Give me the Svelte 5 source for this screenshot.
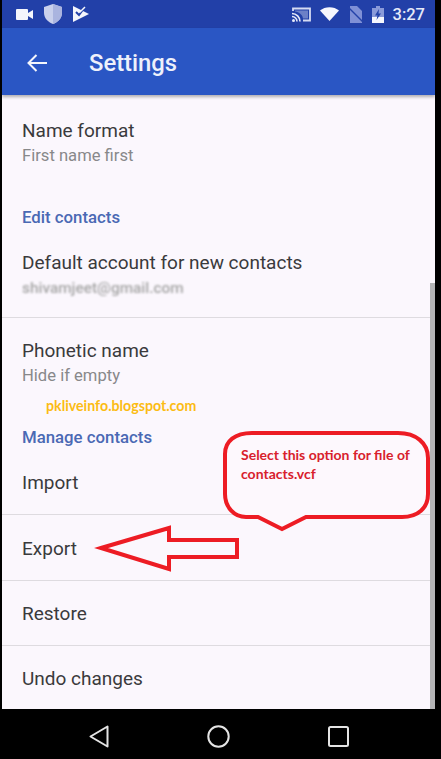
<script>
    const firstGroup = [
        { title: 'Name format', sub: 'First name first' }
    ];
    const actions = [
        { label: 'Import', size: 'tall' },
        { label: 'Export', size: 'tall' },
        { label: 'Restore', size: 'mid' },
        { label: 'Undo changes', size: 'last' }
    ];
</script>

<div class="phone">
    <div class="status">
        <div class="left-icons">
            <svg width="17" height="11" viewBox="0 0 17 11"><path d="M1 0h10a1 1 0 0 1 1 1v3l5-3v9l-5-3v3a1 1 0 0 1-1 1H1a1 1 0 0 1-1-1V1a1 1 0 0 1 1-1z" fill="#f4f6fc"/></svg>
            <svg width="20" height="20" viewBox="0 0 20 20"><path d="M10 0l9 3v6c0 5-4 9-9 11-5-2-9-6-9-11V3z" fill="#c9d0ec"/><path d="M10 0l9 3v6c0 5-4 9-9 11z" fill="#aab4df"/></svg>
            <svg width="16" height="16" viewBox="0 0 16 16"><path d="M0 0l16 8L0 16z" fill="#f4f6fc"/><path d="M3 6l3 3 6-8" fill="none" stroke="#2442a8" stroke-width="2"/><path d="M5 4l2 2 5-5" fill="none" stroke="#f4f6fc" stroke-width="1.5"/></svg>
        </div>
        <div class="right-icons">
            <svg class="cast" width="19" height="15" viewBox="0 0 19 15"><path d="M1 4V1.500h17v12h-7" fill="none" stroke="#d5dbf2" stroke-width="1.800"/><path d="M3 3.500h13v8h-5C10.500 7.500 7 5 3 4.500z" fill="#aab5e0" opacity=".55"/><path d="M0 6.500a8 8 0 0 1 8 8M0 9.500a5 5 0 0 1 5 5" fill="none" stroke="#e6eaf8" stroke-width="1.600"/><circle cx="1.500" cy="13.500" r="1.500" fill="#e6eaf8"/></svg>
            <svg class="wifi" width="19" height="14" viewBox="0 0 19 14"><path d="M0 3.500C5-1 14-1 19 3.500L9.500 14z" fill="#f6f7fd"/></svg>
            <svg class="sim" width="15" height="17" viewBox="0 0 15 17"><path d="M2 0h7l5 5v12H2z" fill="#7f90d6"/><path d="M0 1l15 15" stroke="#2442a8" stroke-width="1.500"/></svg>
            <svg class="battery" width="12" height="17" viewBox="0 0 12 17"><path d="M4 0h4v2h4v15H0V2h4z" fill="#8a9ad9"/><path d="M0 11h12v6H0z" fill="#f6f7fd"/><path d="M7 3L3 9.500h2.500L4.500 14 9 7.500H6.500z" fill="#2442a8"/></svg>
            <span class="time">3:27</span>
        </div>
    </div>

    <header class="toolbar">
        <svg class="back" width="20" height="18" viewBox="0 0 20 18"><path d="M20 9H2M9.500 1L1.500 9l8 8" fill="none" stroke="#f4f6fc" stroke-width="2"/></svg>
        <h1>Settings</h1>
    </header>

    <main class="list">
        {#each firstGroup as item}
            <div class="two">
                <div class="title">{item.title}</div>
                <div class="sub">{item.sub}</div>
            </div>
        {/each}

        <div class="section">Edit contacts</div>
        <div class="two ruled">
            <div class="title shifted">Default account for new contacts</div>
            <div class="sub hidden-mail">shivamjeet@gmail.com</div>
        </div>

        <div class="two">
            <div class="title">Phonetic name</div>
            <div class="sub">Hide if empty</div>
        </div>

        <div class="section">Manage contacts</div>
        {#each actions as action}
            <div class="single {action.size}">{action.label}</div>
        {/each}

        <div class="scrollbar"></div>
    </main>

    <nav class="navbar">
        <svg width="20" height="23" viewBox="0 0 20 23"><path d="M18.500 1.500v20L1.500 11.500z" fill="none" stroke="#e4e4e4" stroke-width="2" stroke-linejoin="round"/></svg>
        <svg width="23" height="23" viewBox="0 0 23 23"><circle cx="11.500" cy="11.500" r="10.200" fill="none" stroke="#e4e4e4" stroke-width="2"/></svg>
        <svg width="21" height="21" viewBox="0 0 21 21"><rect x="1" y="1" width="19" height="19" rx="1.500" fill="none" stroke="#e4e4e4" stroke-width="2"/></svg>
    </nav>

    <svg class="marks" width="441" height="759" viewBox="0 0 441 759">
        <path d="M252 433H398C416 433 428 443 428 458V494C428 508 418 517 402 517H306L282 529L258 517H246C234 517 225 507 225 494V454C225 441 235 433 252 433Z" fill="#fdf8fd" stroke="#ed1c24" stroke-width="4"/>
        <path d="M101 548L169 528V540H237V557H169V569Z" fill="#fbf7fd" stroke="#ed1c24" stroke-width="4"/>
    </svg>
    <div class="note">Select this option for file of<br />contacts.vcf</div>
    <div class="watermark">pkliveinfo.blogspot.com</div>
</div>

<style>
    :global(body) {
        margin: 0;
        background: #000;
    }

    .phone {
        position: relative;
        width: 441px;
        height: 759px;
        box-sizing: border-box;
        padding: 0 6px 0 2px;
        background: #000;
        display: flex;
        flex-direction: column;
        font-family: Roboto, sans-serif;
        overflow: hidden;
    }

    .status {
        height: 28px;
        flex: none;
        background: #2240a8;
        display: flex;
        align-items: center;
        justify-content: space-between;
        padding: 0 10px 0 14px;
    }

    .left-icons,
    .right-icons {
        display: flex;
        align-items: center;
    }

    .left-icons {
        gap: 10px;
    }

    .right-icons {
        gap: 9px;
    }

    .time {
        color: #e6eaf8;
        font-size: 16.5px;
        font-weight: 500;
    }

    .toolbar {
        height: 67px;
        flex: none;
        box-sizing: border-box;
        padding: 2px 0 0 25px;
        background: #2a56c4;
        display: flex;
        align-items: center;
        box-shadow: 0 2px 3px rgba(0, 0, 0, 0.3);
        z-index: 1;
    }

    h1 {
        margin: 0 0 0 42px;
        font-size: 23.8px;
        font-weight: 500;
        color: #eef1fb;
    }

    .list {
        position: relative;
        flex: 1;
        background: #fbf7fd;
        padding-top: 3px;
        display: flex;
        flex-direction: column;
    }

    .two {
        padding: 21px 20px 19px;
    }

    .ruled {
        border-bottom: 1px solid #dedbe0;
    }

    .title {
        font-size: 19px;
        line-height: 24px;
        color: #3a3a3c;
    }

    .shifted {
        padding-top: 1px;
        margin-bottom: -1px;
    }

    .sub {
        padding-top: 1px;
        margin-bottom: -1px;
        font-size: 16.6px;
        line-height: 24px;
        color: #88888a;
    }

    .hidden-mail {
        padding-top: 2px;
        margin-bottom: -2px;
        font-size: 15.4px;
        font-weight: 500;
        color: #a6a6a6;
        filter: blur(1.3px);
    }

    .section {
        margin-top: 19px;
        padding: 0 20px;
        font-size: 16.8px;
        line-height: 24px;
        font-weight: 500;
        color: #4a69b4;
    }

    .single {
        display: flex;
        align-items: center;
        box-sizing: border-box;
        padding: 1px 20px 0;
        font-size: 19px;
        color: #3a3a3c;
        border-bottom: 1px solid #dedbe0;
    }

    .tall {
        height: 66px;
    }

    .mid {
        height: 65px;
    }

    .last {
        flex: 1;
        border-bottom: 0;
    }

    .scrollbar {
        position: absolute;
        right: 0;
        top: 188px;
        bottom: 0;
        width: 5px;
        background: #b4b4b6;
    }

    .navbar {
        height: 50px;
        flex: none;
        background: #000;
        display: grid;
        grid-template-columns: 20px 23px 21px;
        column-gap: 98px;
        justify-content: center;
        align-items: center;
        padding: 5px 0 0 0;
        box-sizing: border-box;
    }

    .marks {
        position: absolute;
        left: 0;
        top: 0;
        z-index: 2;
    }

    .note {
        position: absolute;
        left: 241px;
        top: 445px;
        z-index: 3;
        font-family: Lato, sans-serif;
        font-size: 14px;
        font-weight: 700;
        line-height: 19px;
        color: #d8202c;
    }

    .watermark {
        position: absolute;
        left: 46px;
        top: 397px;
        z-index: 3;
        font-family: Lato, sans-serif;
        font-size: 14.2px;
        font-weight: 700;
        line-height: 18px;
        color: #fbbc14;
    }
</style>
